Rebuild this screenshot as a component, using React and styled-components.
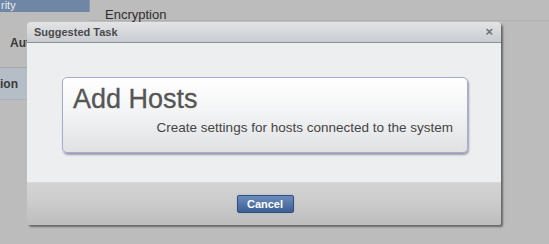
import React from "react";
import styled, { createGlobalStyle } from "styled-components";

const GlobalStyle = createGlobalStyle`
  html, body {
    margin: 0;
    padding: 0;
    background: #bcbcbc;
    font-family: "Liberation Sans", Arial, sans-serif;
  }
`;

const App = () => {
  return (
    <Page>
      <GlobalStyle />
      <Backdrop>
        <SideNav>
          <NavTab>rity</NavTab>
          <NavItem>Auth</NavItem>
          <NavItem $active>ion</NavItem>
        </SideNav>
        <Main>
          <MainTitle>Encryption</MainTitle>
        </Main>
      </Backdrop>

      <Dialog>
        <TitleBar>
          <TitleText>Suggested Task</TitleText>
          <CloseButton>×</CloseButton>
        </TitleBar>
        <DialogBody>
          <TaskCard>
            <TaskTitle>Add Hosts</TaskTitle>
            <TaskDesc>Create settings for hosts connected to the system</TaskDesc>
          </TaskCard>
        </DialogBody>
        <DialogFooter>
          <CancelButton>Cancel</CancelButton>
        </DialogFooter>
      </Dialog>
    </Page>
  );
};

const Page = styled.div`
  position: relative;
  width: 549px;
  height: 244px;
  overflow: hidden;
  background: #bcbcbc;
`;

const Backdrop = styled.div`
  display: flex;
  height: 100%;
`;

const SideNav = styled.div`
  width: 90px;
  display: flex;
  flex-direction: column;
`;

const NavTab = styled.div`
  height: 12px;
  background: #6f86a4;
  color: #e6ecf3;
  font-size: 11px;
  line-height: 11px;
  padding-left: 1px;
  overflow: hidden;
  border-right: 1px solid #8a97a8;
`;

const NavItem = styled.div`
  height: ${(p) => (p.$active ? "33px" : "55px")};
  display: flex;
  align-items: center;
  padding-left: ${(p) => (p.$active ? "0" : "10px")};
  box-sizing: border-box;
  font-size: 12px;
  font-weight: bold;
  color: #3a3a3a;
  background: ${(p) => (p.$active ? "#b5bdc7" : "transparent")};
  border-top: ${(p) => (p.$active ? "1px solid #a2a8b0" : "none")};
  border-bottom: ${(p) => (p.$active ? "1px solid #a9b0b8" : "none")};
  padding-top: ${(p) => (p.$active ? "0" : "6px")};
`;

const Main = styled.div`
  flex: 1;
  display: flex;
  flex-direction: column;
`;

const MainTitle = styled.div`
  height: 21px;
  padding-left: 15px;
  box-sizing: border-box;
  font-size: 13px;
  line-height: 29px;
  color: #2e2e2e;
  border-bottom: 1px solid #b0b0b0;
`;

const Dialog = styled.div`
  position: absolute;
  left: 27px;
  top: 22px;
  width: 474px;
  height: 203px;
  display: flex;
  flex-direction: column;
  border-radius: 4px 4px 2px 2px;
  overflow: hidden;
  box-shadow: 2px 2px 2px rgba(0, 0, 0, 0.45);
`;

const TitleBar = styled.div`
  height: 20px;
  display: flex;
  align-items: center;
  justify-content: space-between;
  padding: 0 8px 0 7px;
  background: linear-gradient(#e2e4e6, #c9ccd0);
  border-bottom: 1px solid #8d9094;
`;

const TitleText = styled.div`
  font-size: 11px;
  font-weight: bold;
  color: #4a4a4a;
`;

const CloseButton = styled.div`
  font-size: 13px;
  font-weight: bold;
  color: #707070;
  line-height: 12px;
`;

const DialogBody = styled.div`
  height: 139px;
  background: #edeef0;
  padding: 34px 0 0 35px;
  box-sizing: border-box;
`;

const TaskCard = styled.div`
  width: 406px;
  height: 76px;
  box-sizing: border-box;
  border: 1px solid #a9aad0;
  border-radius: 5px;
  background: linear-gradient(#ffffff 0%, #f3f4f5 45%, #e0e1e3 100%);
  box-shadow: 1px 2px 2px rgba(90, 90, 110, 0.55);
  display: flex;
  flex-direction: column;
  padding: 6px 14px 0 10px;
`;

const TaskTitle = styled.div`
  font-size: 27px;
  line-height: 30px;
  color: #555;
  -webkit-text-stroke: 0.3px #555;
`;

const TaskDesc = styled.div`
  font-size: 13.5px;
  line-height: 16px;
  margin-top: 6px;
  color: #454545;
  text-align: right;
`;

const DialogFooter = styled.div`
  flex: 1;
  display: flex;
  justify-content: center;
  align-items: flex-start;
  padding-top: 12px;
  padding-left: 2px;
  background: linear-gradient(#d3d3d3 0%, #cdcdcd 40%, #bdbdbd 100%);
  border-top: 1px solid #d8d8d8;
`;

const CancelButton = styled.button`
  width: 57px;
  height: 18px;
  padding: 0;
  border: 1px solid #34507c;
  border-radius: 2px;
  background: linear-gradient(#6a8cbd, #3d5e93);
  color: #ffffff;
  font-family: "Liberation Sans", Arial, sans-serif;
  font-size: 11px;
  font-weight: bold;
  box-shadow: 0 0 2px rgba(160, 170, 210, 0.9);
`;

export default App;
